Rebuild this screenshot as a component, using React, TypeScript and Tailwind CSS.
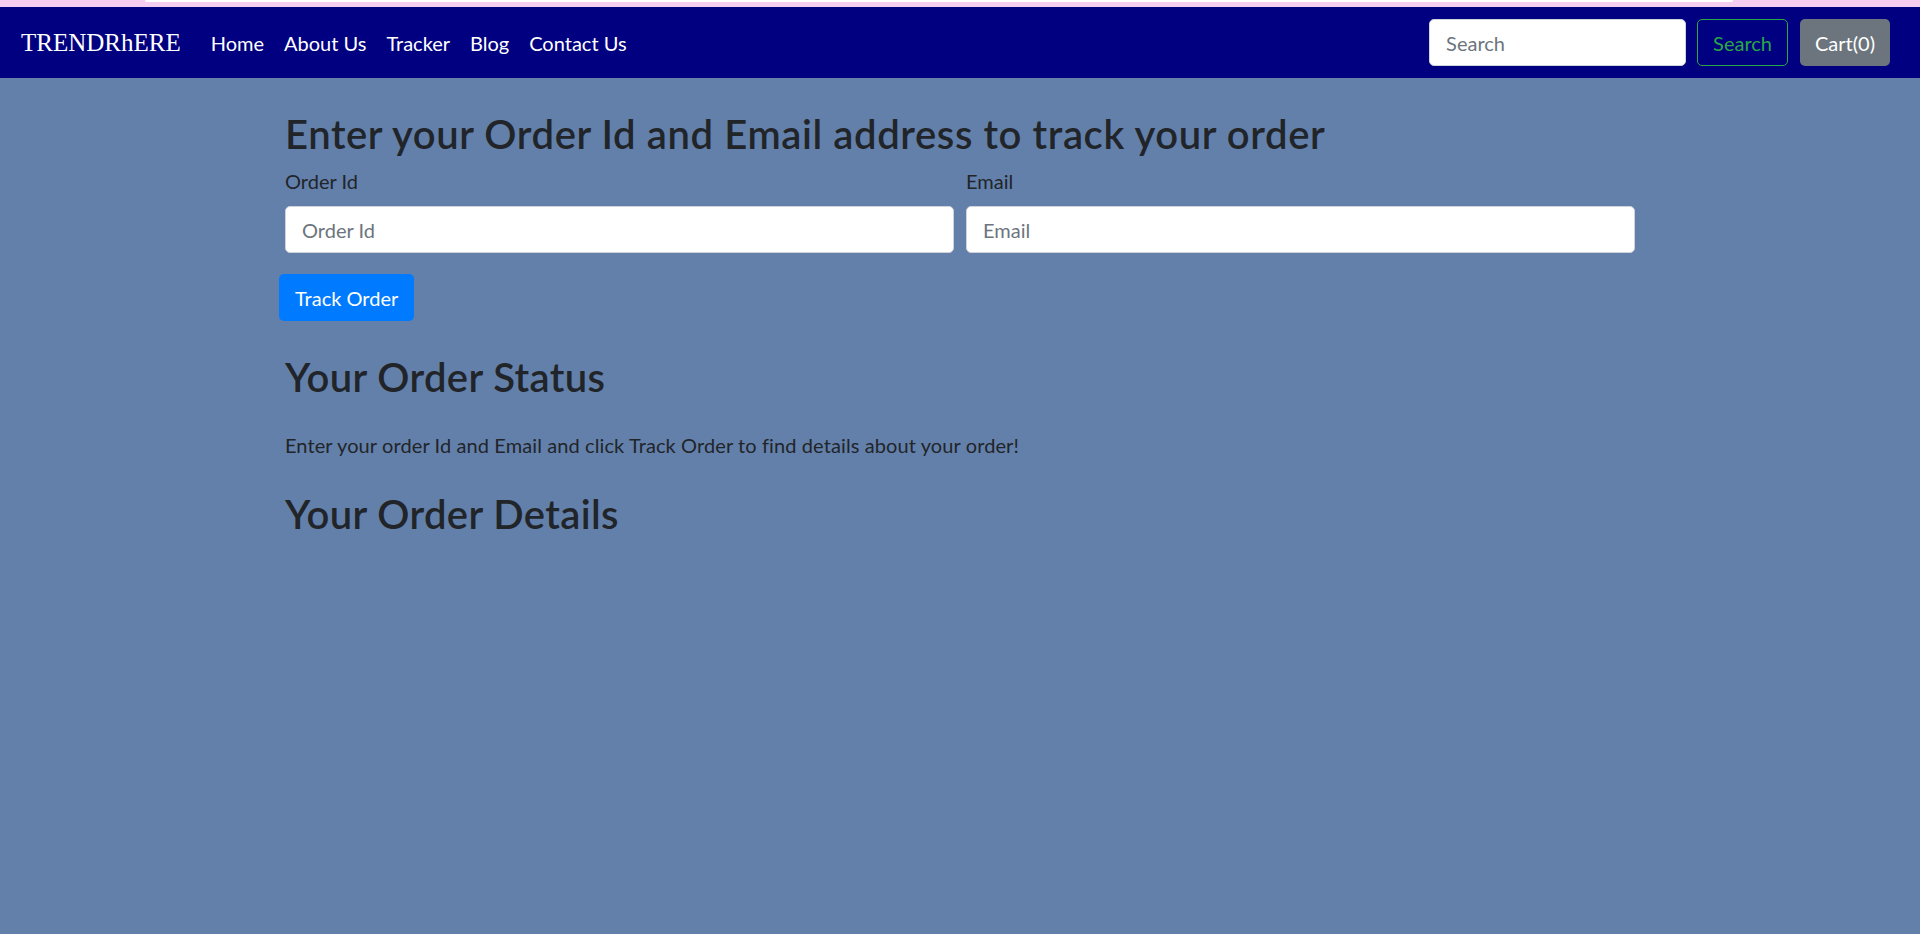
import React from "react"

const links = ["Home", "About Us", "Tracker", "Blog", "Contact Us"]

export default function App() {
    return (
        <div className="min-h-[934px] bg-[#6380ab] font-['Lato',sans-serif] text-[#212529]">
            {/* browser strip */}
            <div className="h-[7px] bg-[#f5cdf0] flex">
                <div className="ml-[145px] w-[1588px] h-[2px] bg-white rounded-b-full" />
            </div>

            {/* Navbar */}
            <nav className="h-[71px] bg-[#000080] flex items-center pl-[21px] pr-[30px]">
                <a className="font-['Liberation_Serif',serif] text-[25px] text-white mr-[20px] leading-none">
                    TRENDRhERE
                </a>
                <ul className="flex items-center">
                    {links.map((l) => (
                        <li key={l}>
                            <a className="block px-[10px] text-[20px] text-white leading-[30px]">{l}</a>
                        </li>
                    ))}
                </ul>
                <div className="ml-auto flex items-center">
                    <input
                        placeholder="Search"
                        className="w-[257px] h-[47px] rounded-[5px] bg-white border border-[#ced4da] px-[16px] text-[20px] placeholder:text-[#6c757d] focus:outline-none"
                    />
                    <button className="ml-[11px] h-[47px] px-[15px] rounded-[5px] border border-[#28a745] text-[#28a745] text-[20px]">
                        Search
                    </button>
                    <button className="ml-[12px] h-[47px] px-[15px] rounded-[5px] bg-[#6c757d] text-white text-[20px]">
                        Cart(0)
                    </button>
                </div>
            </nav>

            {/* Tracker */}
            <div className="w-[1350px] mx-auto pt-[32px]">
                <h2 className="text-[40px] leading-[48px] font-semibold tracking-[0.6px] mb-[8px]">
                    Enter your Order Id and Email address to track your order
                </h2>
                <div className="grid grid-cols-2 gap-x-[12px]">
                    <div>
                        <label className="block text-[20px] leading-[30px] mb-[10px]">Order Id</label>
                        <input
                            placeholder="Order Id"
                            className="w-full h-[47px] rounded-[5px] bg-white border border-[#ced4da] px-[16px] text-[20px] placeholder:text-[#6c757d] focus:outline-none"
                        />
                    </div>
                    <div>
                        <label className="block text-[20px] leading-[30px] mb-[10px]">Email</label>
                        <input
                            placeholder="Email"
                            className="w-full h-[47px] rounded-[5px] bg-white border border-[#ced4da] px-[16px] text-[20px] placeholder:text-[#6c757d] focus:outline-none"
                        />
                    </div>
                </div>
                <button className="-ml-[6px] mt-[21px] h-[47px] px-[16px] rounded-[5px] bg-[#007bff] text-white text-[20px]">
                    Track Order
                </button>

                <h2 className="mt-[32px] text-[40px] leading-[48px] font-semibold tracking-[0.4px]">
                    Your Order Status
                </h2>
                <p className="mt-[29px] text-[20px] leading-[30px] tracking-[0.1px]">
                    Enter your order Id and Email and click Track Order to find details about your order!
                </p>
                <h2 className="mt-[30px] text-[40px] leading-[48px] font-semibold tracking-[0.4px]">
                    Your Order Details
                </h2>
            </div>
        </div>
    )
}
